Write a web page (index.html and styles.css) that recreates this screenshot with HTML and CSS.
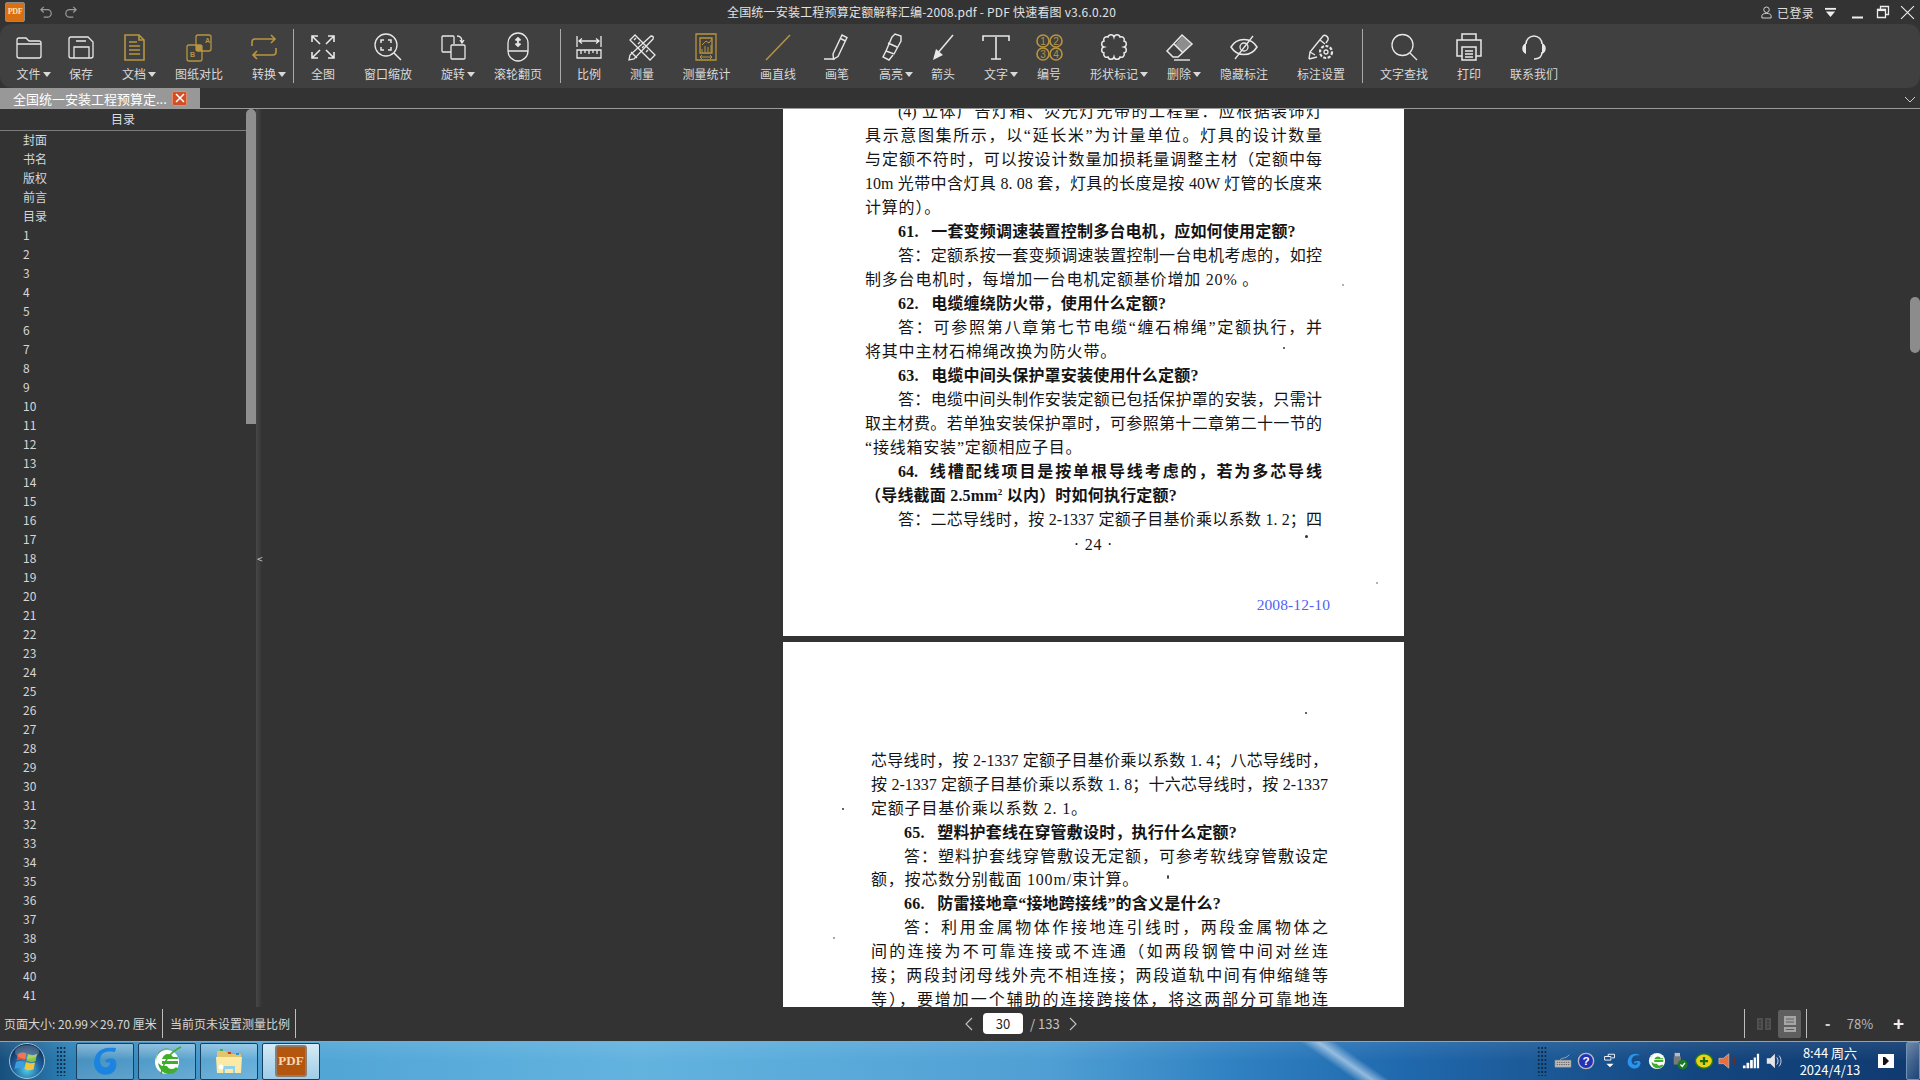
FILE: index.html
```html
<!DOCTYPE html>
<html lang="zh">
<head>
<meta charset="utf-8">
<title>PDF 快速看图</title>
<link rel="stylesheet" href="styles.css">
</head>
<body>
<div class="app">
  <header class="titlebar">
    <div class="tb-left">
      <div class="logo">PDF</div>
      <svg class="qa" viewBox="0 0 16 16"><path d="M5 2 2 5l3 3M2 5h7a4 4 0 0 1 0 8H5"/></svg>
      <svg class="qa" viewBox="0 0 16 16"><path d="M11 2l3 3-3 3M14 5H7a4 4 0 0 0 0 8h4"/></svg>
    </div>
    <div class="doc-title">全国统一安装工程预算定额解释汇编-2008.pdf - PDF 快速看图 v3.6.0.20</div>
    <div class="tb-right">
      <svg class="user" viewBox="0 0 12 14"><circle cx="6" cy="4" r="3"/><path d="M1 13v-2.500c0-1.500 2-2.500 5-2.500s5 1 5 2.500V13z"/></svg>
      <span class="login">已登录</span>
      <svg class="menu-ico" viewBox="0 0 14 12"><path class="bar" d="M1 1h12v2H1z"/><path class="bar" d="M2 5h10l-5 6z"/></svg>
      <svg class="win-btn minb" viewBox="0 0 14 14"><path d="M1 12.500h11" stroke-width="2"/></svg>
      <svg class="win-btn resb" viewBox="0 0 14 14"><path d="M1.500 4.500h8v8h-8zM4.500 4V1.500h8v8h-3" stroke-width="1.300"/><path d="M1.500 5h8" stroke-width="2.200"/></svg>
      <svg class="win-btn clsb" viewBox="0 0 14 14"><path d="M1 1l12 12M13 1 1 13"/></svg>
    </div>
  </header>

  <nav class="toolbar">
    <div class="group g1">
      <div class="tool"><svg class="ico" viewBox="0 0 30 30"><path d="M3 8a2 2 0 0 1 2-2h7l3 3h10a2 2 0 0 1 2 2v13a2 2 0 0 1-2 2H5a2 2 0 0 1-2-2zM3 12h24"/></svg><span class="lab">文件<i class="caret"></i></span></div>
      <div class="tool"><svg class="ico" viewBox="0 0 30 30"><path d="M5 5h17l5 5v14a2 2 0 0 1-2 2H5a2 2 0 0 1-2-2V7a2 2 0 0 1 2-2zM10 9h10M8 26V15h15v11"/></svg><span class="lab">保存</span></div>
      <div class="tool"><svg class="ico gold" viewBox="0 0 30 30"><path d="M6 3h14l5 5v20H6zM20 3v5h5M10 10h8M10 14h11M10 18h11M10 22h11" stroke-width="1.600"/></svg><span class="lab">文档<i class="caret"></i></span></div>
      <div class="tool"><svg class="ico gold" viewBox="0 0 30 30"><rect x="12" y="3" width="15" height="16" rx="2"/><rect x="3" y="13" width="15" height="16" rx="2"/><rect class="fill" x="12" y="13" width="6" height="6"/><text class="mini" x="21" y="11">A</text><text class="mini" x="6" y="25">B</text></svg><span class="lab">图纸对比</span></div>
      <div class="tool"><svg class="ico gold" viewBox="0 0 30 30"><path d="M3 14v-4a3 3 0 0 1 3-3h20M22 3l4 4-4 4M27 16v4a3 3 0 0 1-3 3H4M8 19l-4 4 4 4" stroke-width="1.600"/></svg><span class="lab">转换<i class="caret"></i></span></div>
    </div>
    <div class="sep"></div>
    <div class="group g2">
      <div class="tool"><svg class="ico" viewBox="0 0 30 30"><path d="M4 4l8 8M4 10V4h6M26 4l-8 8M20 4h6v6M4 26l8-8M4 20v6h6M26 26l-8-8M26 20v6h-6" stroke-width="1.600"/></svg><span class="lab">全图</span></div>
      <div class="tool"><svg class="ico" viewBox="0 0 30 30"><circle cx="13" cy="13" r="11"/><path d="M21 21l7 7M8 11V8h3M15 8h3v3M18 15v3h-3M11 18H8v-3" stroke-width="1.500"/></svg><span class="lab">窗口缩放</span></div>
      <div class="tool"><svg class="ico" viewBox="0 0 30 30"><path d="M13 20H5a1 1 0 0 1-1-1V5a1 1 0 0 1 1-1h10a1 1 0 0 1 1 1v7"/><rect x="13" y="13" width="14" height="14" rx="1"/><path d="M19 4c3 0 5 2 5 6M22 8l2 3 2-3"/></svg><span class="lab">旋转<i class="caret"></i></span></div>
      <div class="tool"><svg class="ico" viewBox="0 0 30 30"><path d="M5 11a10 10 0 0 1 20 0v8a10 10 0 0 1-20 0zM5 19h20"/><path d="M15 6v8M12.500 8.500 15 6l2.500 2.500M12.500 11.500 15 14l2.500-2.500" stroke-width="1.800"/></svg><span class="lab">滚轮翻页</span></div>
    </div>
    <div class="sep"></div>
    <div class="group g3a">
      <div class="tool"><svg class="ico" viewBox="0 0 30 30"><path d="M3 4v11M27 4v11M5 9h20M8 6.500 5 9l3 2.500M22 6.500 25 9l-3 2.500" stroke-width="1.300"/><path d="M3 18h24v8H3zM7 18v4M11 18v3M15 18v4M19 18v3M23 18v4" stroke-width="1.300"/></svg><span class="lab">比例</span></div>
    </div>
    <div class="group g3b">
      <div class="tool"><svg class="ico" viewBox="0 0 30 30"><path d="M8 3 3 8l20 20 5-5zM7 8l2-2M11 12l2-2M15 16l2-2M19 20l2-2"/><path d="M24 4c2 0 3 1 2 3L7 27l-5 1 1-5zM4 20l6 6"/></svg><span class="lab">测量</span></div>
      <div class="tool"><svg class="ico gold" viewBox="0 0 30 30"><path d="M5 2h20v26H5zM9 6h12v15H9z" stroke-width="1.300"/><path d="M11 17v3M14 14v6M17 15v5M20 13v7M11 13l4-4 3 2 3-4M9 25h12M11 23l-2 2 2 2M19 23l2 2-2 2" stroke-width="1"/></svg><span class="lab">测量统计</span></div>
      <div class="tool"><svg class="ico gold" viewBox="0 0 30 30"><path d="M3 28 27 3" stroke-width="1.500"/></svg><span class="lab">画直线</span></div>
      <div class="tool"><svg class="ico" viewBox="0 0 30 30"><path d="M11 22 20 3l5 2.500-9 19-4.500 2.500zM18.500 6.500l5 2.500M2 27h11" stroke-width="1.400"/></svg><span class="lab">画笔</span></div>
      <div class="tool"><svg class="ico" viewBox="0 0 30 30"><path d="M16 5l3-3 6 2 0 5-7 13-8-3zM10 19l-3 6 6 3 4-5M12 11l9 4" stroke-width="1.400"/></svg><span class="lab">高亮<i class="caret"></i></span></div>
      <div class="tool"><svg class="ico" viewBox="0 0 30 30"><path d="M25 3 9 22" stroke-width="1.500"/><path class="solid" d="M5 28l3-11 7 6z"/></svg><span class="lab">箭头</span></div>
      <div class="tool"><svg class="ico" viewBox="0 0 30 30"><path d="M15 5v22M10 27h10M2 9V4h26v5" stroke-width="1.600"/></svg><span class="lab">文字<i class="caret"></i></span></div>
      <div class="tool"><svg class="ico gold nums" viewBox="0 0 30 30"><circle cx="9" cy="9" r="6"/><circle cx="22" cy="9" r="6"/><circle cx="9" cy="22" r="6"/><circle cx="22" cy="22" r="6"/><text x="9" y="12.500">1</text><text x="22" y="12.500">2</text><text x="9" y="25.500">3</text><text x="22" y="25.500">4</text></svg><span class="lab">编号</span></div>
      <div class="tool"><svg class="ico" viewBox="0 0 30 30"><path d="M5 9a3 3 0 0 1 4-4a3.100 3.100 0 0 1 6 0a3.100 3.100 0 0 1 6 0a3 3 0 0 1 4 4a3.100 3.100 0 0 1 0 6a3.100 3.100 0 0 1 0 6a3 3 0 0 1-4 4a3.100 3.100 0 0 1-6 0a3.100 3.100 0 0 1-6 0a3 3 0 0 1-4-4a3.100 3.100 0 0 1 0-6a3.100 3.100 0 0 1 0-6z" stroke-width="1.500"/></svg><span class="lab">形状标记<i class="caret"></i></span></div>
      <div class="tool"><svg class="ico" viewBox="0 0 30 30"><path class="hatch" d="M11 13 18 4l9 8-8 9z"/><path d="M3 19 18 3l10 9-14 13H9zM10 12l9 9" stroke-width="1.500"/><path class="under" d="M10 28h16"/></svg><span class="lab">删除<i class="caret"></i></span></div>
      <div class="tool"><svg class="ico" viewBox="0 0 30 30"><path d="M2 15c6-10 20-10 26 0-6 10-20 10-26 0z" stroke-width="1.500"/><circle cx="15" cy="15" r="4"/><path d="M6 27 24 4"/></svg><span class="lab">隐藏标注</span></div>
      <div class="tool"><svg class="ico" viewBox="0 0 30 30"><path d="M3 27l1-7L17 4c2-2 6 1 5 4l-2 3M4 20l5 3M3 27l8-2M14 8l5 4" stroke-width="1.400"/><circle cx="20" cy="20" r="6" stroke-width="2.200" stroke-dasharray="3 1.500"/><circle cx="20" cy="20" r="2"/></svg><span class="lab">标注设置</span></div>
    </div>
    <div class="sep"></div>
    <div class="group g4">
      <div class="tool"><svg class="ico" viewBox="0 0 30 30"><circle cx="13.500" cy="13" r="10.500"/><path d="M21 21l7 7"/></svg><span class="lab">文字查找</span></div>
      <div class="tool"><svg class="ico" viewBox="0 0 30 30"><path d="M8 8V2h14v6M8 24H3V8h24v16h-5" stroke-width="1.500"/><path d="M8 15h14v13H8zM11 19h8M11 22h8M11 25h8" stroke-width="1.500"/></svg><span class="lab">打印</span></div>
      <div class="tool"><svg class="ico" viewBox="0 0 30 30"><path d="M7 12a8 8 0 0 1 16 0M23 20c0 5-3 7-8 7" stroke-width="1.500"/><path class="solid" d="M7 11v11c-5-2-5-9 0-11zM23 11v11c5-2 5-9 0-11z"/></svg><span class="lab">联系我们</span></div>
    </div>
  </nav>

  <div class="tabbar">
    <div class="tab"><span class="tab-text">全国统一安装工程预算定...</span><span class="tab-x"><svg viewBox="0 0 10 10"><path d="M1 1l8 8M9 1 1 9"/></svg></span></div>
    <svg class="tab-more" viewBox="0 0 12 7"><path d="M1 1l5 5 5-5"/></svg>
  </div>

  <main class="body">
    <aside class="sidebar">
      <div class="side-main">
        <div class="side-head">目录</div>
        <ul class="toc">
          <li>封面</li><li>书名</li><li>版权</li><li>前言</li><li>目录</li>
          <li>1</li><li>2</li><li>3</li><li>4</li><li>5</li><li>6</li><li>7</li><li>8</li><li>9</li><li>10</li>
          <li>11</li><li>12</li><li>13</li><li>14</li><li>15</li><li>16</li><li>17</li><li>18</li><li>19</li><li>20</li>
          <li>21</li><li>22</li><li>23</li><li>24</li><li>25</li><li>26</li><li>27</li><li>28</li><li>29</li><li>30</li>
          <li>31</li><li>32</li><li>33</li><li>34</li><li>35</li><li>36</li><li>37</li><li>38</li><li>39</li><li>40</li><li>41</li>
        </ul>
      </div>
      <div class="side-track"><div class="side-thumb"></div></div>
      <div class="splitter"><span class="collapse">&lt;</span></div>
    </aside>

    <section class="viewer">
      <article class="page page-a">
        <p class="ln fit ind">(4) 立体广告灯箱、荧光灯光带的工程量：应根据装饰灯</p>
        <p class="ln fit">具示意图集所示，以“延长米”为计量单位。灯具的设计数量</p>
        <p class="ln fit">与定额不符时，可以按设计数量加损耗量调整主材（定额中每</p>
        <p class="ln fit">10m 光带中含灯具 8. 08 套，灯具的长度是按 40W 灯管的长度来</p>
        <p class="ln">计算的）。</p>
        <p class="ln ind hd">61.&nbsp;&nbsp; 一套变频调速装置控制多台电机，应如何使用定额?</p>
        <p class="ln fit ind">答：定额系按一套变频调速装置控制一台电机考虑的，如控</p>
        <p class="ln">制多台电机时，每增加一台电机定额基价增加 20% 。</p>
        <p class="ln ind hd">62.&nbsp;&nbsp; 电缆缠绕防火带，使用什么定额?</p>
        <p class="ln fit ind">答：可参照第八章第七节电缆“缠石棉绳”定额执行，并</p>
        <p class="ln">将其中主材石棉绳改换为防火带。</p>
        <p class="ln ind hd">63.&nbsp;&nbsp; 电缆中间头保护罩安装使用什么定额?</p>
        <p class="ln fit ind">答：电缆中间头制作安装定额已包括保护罩的安装，只需计</p>
        <p class="ln fit">取主材费。若单独安装保护罩时，可参照第十二章第二十一节的</p>
        <p class="ln">“接线箱安装”定额相应子目。</p>
        <p class="ln fit ind hd">64.&nbsp; 线槽配线项目是按单根导线考虑的，若为多芯导线</p>
        <p class="ln hd">（导线截面 2.5mm<sup>2</sup> 以内）时如何执行定额?</p>
        <p class="ln fit ind">答：二芯导线时，按 2-1337 定额子目基价乘以系数 1. 2；四</p>
        <p class="ln pno">· 24 ·</p>
        <p class="stamp">2008-12-10</p>
        <i class="speck s1"></i><i class="speck s2"></i><i class="speck s3"></i><i class="speck s4"></i>
      </article>
      <article class="page page-b">
        <p class="ln fit">芯导线时，按 2-1337 定额子目基价乘以系数 1. 4；八芯导线时，</p>
        <p class="ln fit">按 2-1337 定额子目基价乘以系数 1. 8；十六芯导线时，按 2-1337</p>
        <p class="ln">定额子目基价乘以系数 2. 1。</p>
        <p class="ln ind hd">65.&nbsp;&nbsp; 塑料护套线在穿管敷设时，执行什么定额?</p>
        <p class="ln fit ind">答：塑料护套线穿管敷设无定额，可参考软线穿管敷设定</p>
        <p class="ln">额，按芯数分别截面 100m/束计算。</p>
        <p class="ln ind hd">66.&nbsp;&nbsp; 防雷接地章“接地跨接线”的含义是什么?</p>
        <p class="ln fit ind">答：利用金属物体作接地连引线时，两段金属物体之</p>
        <p class="ln fit">间的连接为不可靠连接或不连通（如两段钢管中间对丝连</p>
        <p class="ln fit">接；两段封闭母线外壳不相连接；两段道轨中间有伸缩缝等</p>
        <p class="ln fit">等），要增加一个辅助的连接跨接体，将这两部分可靠地连</p>
        <i class="speck s5"></i><i class="speck s6"></i><i class="speck s7"></i><i class="speck s8"></i>
      </article>
      <div class="view-thumb"></div>
    </section>
  </main>

  <footer class="statusbar">
    <div class="st-cell st-size">页面大小: 20.99×29.70 厘米</div>
    <div class="st-cell st-scale">当前页未设置测量比例</div>
    <div class="pager">
      <svg class="chev" viewBox="0 0 8 14"><path d="M7 1 1 7l6 6"/></svg>
      <span class="page-input">30</span>
      <span class="page-total">/ 133</span>
      <svg class="chev" viewBox="0 0 8 14"><path d="M1 1l6 6-6 6"/></svg>
    </div>
    <div class="st-right">
      <svg class="mode off" viewBox="0 0 14 12"><path d="M0 0h6v12H0zM8 0h6v12H8z"/><path class="cut" d="M2 3h2M2 6h2M2 9h2M10 3h2M10 6h2M10 9h2"/></svg>
      <div class="mode-on"><svg class="mode" viewBox="0 0 14 16"><path d="M1 0h12v9H1zM1 11h12v5H1z"/><path class="cut2" d="M3 3h8M3 6h8M3 13.500h8"/></svg></div>
      <span class="z-minus">-</span>
      <span class="z-val">78%</span>
      <span class="z-plus">+</span>
    </div>
  </footer>

  <div class="taskbar">
    <svg class="orb" viewBox="0 0 36 36">
      <defs><radialGradient id="orbg" cx=".5" cy=".75" r=".7"><stop offset="0" stop-color="#4fd0ea"/><stop offset=".55" stop-color="#1f5f9c"/><stop offset="1" stop-color="#0c2b52"/></radialGradient></defs>
      <circle cx="18" cy="18" r="17.500" fill="url(#orbg)" stroke="#9fc4d8"/>
      <path fill="#e8502e" d="M9 11c3-2 6-2 8.500-.5l-1.500 7c-3-1.500-6-1.500-8.500 0z"/>
      <path fill="#8cc63f" d="M19 11c3 1.500 6 1.500 9 0l-1.500 7c-3 1.500-6 1-9-.5z"/>
      <path fill="#3a9de0" d="M7 19c3-1.500 5.500-1.500 8.500 0L14 26c-3-1.500-5.500-1.500-8.500 0z"/>
      <path fill="#f7c33a" d="M17 19c3 1.500 6 1.500 9 .5L24.500 26.500c-3 1-6 1-9-.5z"/>
      <ellipse cx="18" cy="9" rx="12" ry="7" fill="#fff" opacity=".22"/>
    </svg>
    <div class="grip"></div>
    <div class="task-btn">
      <svg class="task-ico" viewBox="0 0 30 30"><path fill="#1c84e0" d="M26 2c-8-1-16 0-20 7-4 7-2 16 5 19 6 2 14 0 15-7 1-3 0-7-2-8-3-1-7 0-9 1l2 3c2-1 3-1 3 0 0 3-3 5-6 4-4-1-5-7-3-11 2-5 9-5 14-4z"/></svg>
    </div>
    <div class="task-btn">
      <svg class="task-ico" viewBox="0 0 30 30"><circle cx="15" cy="16" r="12" fill="#fff"/><path fill="#3fae2a" d="M4 16a11 12 0 0 1 22-3H10c1-3 3-5 6-5 2 0 4 1 5 3h5c-2-5-6-8-11-8C9 3 4 9 4 16zM10 15h16v3H10zM10 20h5c1 2 2 3 5 3 2 0 3-1 4-2l2 2c-2 3-5 5-9 5-6 0-10-5-11-11z"/><path fill="none" stroke="#3fae2a" stroke-width="1.500" d="M9 28C12 14 18 6 29 1"/></svg>
    </div>
    <div class="task-btn">
      <svg class="task-ico" viewBox="0 0 30 30"><path fill="#e3c46c" d="M3 5h9l2 3h13v8H3z"/><path fill="#fbe9a6" d="M2 11h26l-1 16H3z"/><path fill="#8fd0ea" d="M9 20h12v7h-2v-4h-8v4H9z"/><rect x="6" y="3" width="3" height="2" fill="#3fb24b"/><rect x="14" y="6" width="3" height="2" fill="#c8402e"/><rect x="22" y="7" width="3" height="2" fill="#3a8fd8"/><circle cx="7" cy="21" r="2.500" fill="#fff"/></svg>
    </div>
    <div class="task-btn active"><div class="pdf-big">PDF</div></div>
    <div class="tray">
      <div class="grip grip-r"></div>
      <svg class="ti" viewBox="0 0 20 20"><path fill="#bdbdbd" stroke="#777" stroke-width=".5" d="M1 9h18v8H1z"/><path stroke="#555" stroke-width="1" stroke-dasharray="1.500 1" d="M3 11.500h14M3 14h14"/><path fill="none" stroke="#aaa" d="M7 9c0-3 6-1 10-6"/></svg>
      <svg class="ti" viewBox="0 0 20 20"><circle cx="10" cy="10" r="8.500" fill="#2431b8" stroke="#bbb" stroke-width="1.500"/><text class="ti-q" x="10" y="14.500">?</text></svg>
      <svg class="ti" viewBox="0 0 20 20"><path fill="none" stroke="#fff" d="M4 5h7v4H4zM8 5V2.500h7v4h-3"/><path fill="#fff" d="M6 13h8l-4 4z"/></svg>
      <svg class="ti" viewBox="0 0 20 20"><path fill="#2a93ec" d="M17 3c-4-2-10-1-12 4-2 4-1 9 4 11 4 1 8 0 9-4 1-2 0-3-1-4-2 0-5 0-6 1l1 2c1-1 2-1 3-1 0 2-2 3-4 2-3-1-3-5-2-7 1-3 5-4 8-3z"/></svg>
      <svg class="ti" viewBox="0 0 20 20"><circle cx="10" cy="10" r="9" fill="#fff"/><path fill="#3fae2a" d="M3 10a7 7 0 0 1 14-2H7c1-2 2-3 4-3s3 1 3 2h3c-1-3-4-5-7-5-4 0-7 4-7 8zM7 9h10v2H7zM7 13h3c1 1 1 2 3 2 1 0 2-1 3-1l1 1c-1 2-3 3-6 3-4 0-7-3-7-7z"/></svg>
      <svg class="ti" viewBox="0 0 20 20"><path fill="#7a7a7a" d="M3 5h8v9H3z"/><path fill="#bbb" d="M4 1h6v4H4z"/><circle cx="13" cy="14" r="5.500" fill="#1c7a26"/><path fill="none" stroke="#fff" stroke-width="1.500" d="M10.500 14l2 2 3-4"/></svg>
      <svg class="ti" viewBox="0 0 20 20"><ellipse cx="10" cy="10" rx="9.500" ry="8" fill="#e9d316" stroke="#2c7a1a" stroke-width="1.500"/><path fill="none" stroke="#1f6a14" stroke-width="2.500" d="M10 5.500v9M5.500 10h9"/></svg>
      <svg class="ti" viewBox="0 0 20 20"><path fill="#e87040" stroke="#c9c9c9" stroke-width=".7" d="M1 7h5l6-5v16l-6-5H1z"/><path fill="none" stroke="#6b3030" d="M14 5c2 3 2 7 0 10M17 3c2 4 2 10 0 14"/></svg>
      <svg class="ti" viewBox="0 0 20 20"><path fill="#fff" d="M1 15h3v3H1zM5 12h3v6H5zM9 9h3v9H9zM13 6h2.500v12H13zM16.500 2H19v16h-2.500z"/></svg>
      <svg class="ti" viewBox="0 0 20 20"><path fill="#e6e6e6" d="M2 7h4l5-5v16l-5-5H2z"/><path fill="none" stroke="#e6e6e6" d="M13 6c2 2 2 6 0 8M15.500 4c3 3 3 9 0 12"/></svg>
      <div class="clock"><div>8:44 周六</div><div>2024/4/13</div></div>
      <div class="flag"><svg viewBox="0 0 8 8"><path d="M1 0h2l4 4-4 4H1z"/></svg></div>
      <div class="show-desk"></div>
    </div>
  </div>
</div>
</body>
</html>
```
FILE: styles.css
```css
* { box-sizing: border-box; }
html, body { margin: 0; padding: 0; height: 100%; overflow: hidden; }
body { font-family: "Noto Sans CJK SC", "Noto Sans", sans-serif; font-size: 12px; color: #ddd; background: #333; }
p, ul { margin: 0; padding: 0; }
.app { display: flex; flex-direction: column; width: 1920px; height: 1080px; }

/* title bar */
.titlebar { position: relative; flex: 0 0 24px; height: 24px; display: flex; align-items: center; justify-content: space-between; background: #333; }
.tb-left { display: flex; align-items: center; padding-left: 5px; }
.logo { width: 20px; height: 20px; border-radius: 2px; background: #d96f10; border: 1px solid #8a8a8a; color: #fbe2b5; font: bold 8px/18px "Liberation Serif", serif; text-align: center; letter-spacing: -.3px; }
.qa { width: 15px; height: 15px; margin-left: 14px; fill: none; stroke: #9b9b9b; stroke-width: 1.300; }
.qa + .qa { margin-left: 9px; }
.doc-title { position: absolute; left: 640px; width: 563px; text-align: center; color: #e2e2e2; font-size: 12px; letter-spacing: .2px; line-height: 24px; white-space: nowrap; }
.tb-right { display: flex; align-items: center; padding-right: 5px; }
.user { width: 11px; height: 13px; fill: none; stroke: #ddd; stroke-width: 1; }
.login { margin-left: 5px; font-size: 12px; letter-spacing: .3px; color: #ddd; }
.menu-ico { width: 13px; height: 11px; margin-left: 10px; }
.menu-ico .bar { fill: #eee; }
.win-btn { width: 14px; height: 14px; fill: none; stroke: #eee; stroke-width: 1; }
.minb { margin-left: 14px; }
.resb { margin-left: 11px; }
.clsb { margin-left: 10px; width: 15px; height: 15px; }

/* toolbar */
.toolbar { flex: 0 0 64px; height: 64px; display: flex; background: #404040; border-radius: 12px; }
.group { display: grid; grid-template-rows: 64px; justify-items: center; }
.g1 { grid-template-columns: 57px 48px 58px 72px 58px; }
.g2 { margin-left: 6px; grid-template-columns: 46px 84px 46px 84px; }
.g3a { margin-left: 14px; grid-template-columns: 28px; }
.g3b { margin-left: 18px; grid-template-columns: 42px 87px 56px 62px 46px 58px 48px 58px 72px 58px 72px 82px; }
.g4 { margin-left: 15px; grid-template-columns: 52px 78px 52px; }
.sep { flex: 0 0 1px; height: 54px; margin-top: 5px; background: #a9a9a9; }
.tool { display: flex; flex-direction: column; align-items: center; white-space: nowrap; }
.ico { width: 30px; height: 30px; margin-top: 8px; fill: none; stroke: #e8e8e8; stroke-width: 1.300; }
.ico.gold { stroke: #b8953f; }
.ico .fill { fill: #b8953f; stroke: none; }
.ico .solid { fill: #e8e8e8; stroke: none; }
.ico .hatch { fill: #8d8d8d; stroke: none; }
.ico .under { stroke: #b5b5b5; stroke-width: 2; }
.ico .mini { fill: #b8953f; stroke: none; font: bold 7px "Liberation Sans", sans-serif; }
.nums circle { stroke-width: 1.600; }
.nums text { fill: #b8953f; stroke: none; font: 10px "Liberation Sans", sans-serif; text-anchor: middle; }
.lab { position: relative; height: 16px; margin-top: 4px; font-size: 12px; line-height: 16px; color: #d9d9d9; }
.caret { position: absolute; left: 100%; top: 6px; width: 0; height: 0; margin-left: 2px; border: 4px solid transparent; border-top: 5px solid #d9d9d9; border-bottom: 0; }

/* tabs */
.tabbar { flex: 0 0 21px; height: 21px; display: flex; justify-content: space-between; background: #333; border-bottom: 1px solid #9a9a9a; }
.tab { display: flex; align-items: center; width: 200px; height: 20px; background: #989898; padding-left: 13px; }
.tab-text { width: 159px; font-size: 13px; color: #fff; white-space: nowrap; }
.tab-x { display: flex; align-items: center; justify-content: center; width: 15px; height: 15px; background: #cf4f28; border: 1px solid #e98a6b; border-radius: 2px; }
.tab-x svg { width: 10px; height: 10px; fill: none; stroke: #fff; stroke-width: 1.500; }
.tab-more { width: 12px; height: 7px; margin: 8px 4px 0 0; fill: none; stroke: #cfcfcf; stroke-width: 1; }

/* body */
.body { flex: 0 0 898px; height: 898px; display: flex; overflow: hidden; background: #333; }
.sidebar { flex: 0 0 262px; display: flex; }
.side-main { flex: 0 0 246px; overflow: hidden; }
.side-head { height: 22px; border-bottom: 1px solid #7c7c7c; text-align: center; line-height: 19px; font-size: 12px; color: #ddd; }
.toc { list-style: none; padding-left: 23px; }
.toc li { height: 19px; line-height: 18px; font-size: 12px; color: #d6d6d6; }
.side-track { flex: 0 0 10px; }
.side-thumb { height: 315px; background: #8f8f8f; border-radius: 5px 5px 0 0; }
.splitter { position: relative; flex: 0 0 6px; background: linear-gradient(90deg, #474747, #3a3a3a 70%, #333); }
.collapse { position: absolute; top: 440px; left: 1px; font-size: 10px; line-height: 20px; color: #cfcfcf; }

.viewer { position: relative; flex: 1; overflow: hidden; padding-left: 521px; }
.page { position: relative; width: 621px; background: #fff; color: #141414; overflow: hidden; font-size: 16px; }
.page-a { height: 527px; padding: 0 82px 0 82px; }
.page-b { height: 365px; margin-top: 6px; padding: 107px 76px 0 88px; }
.page-b .ln { height: 23.900px; }
.ln { height: 24px; line-height: 24px; letter-spacing: .8px; white-space: nowrap; text-align: left; font-family: "Liberation Serif", "Noto Sans CJK SC", serif; }
.page-a .ln:first-child { margin-top: -9px; }
.fit { text-align: justify; text-align-last: justify; white-space: normal; text-justify: inter-character; letter-spacing: 0; overflow: hidden; }
.ind { padding-left: 33px; }
.hd { font-weight: 700; letter-spacing: .2px; }
.fit.hd { letter-spacing: 0; }
.ln sup { font-size: 9px; line-height: 0; }
.pno { text-align: center; margin-top: 1px; }
.stamp { margin: 36px -8px 0 0; text-align: right; font: 15.500px/24px "Liberation Serif", serif; letter-spacing: .1px; color: #4f63f5; }
.speck { position: absolute; width: 2px; height: 2px; background: #333; border-radius: 50%; }
.s1 { left: 500px; top: 238px; }
.s2 { left: 522px; top: 426px; width: 3px; height: 3px; }
.s3 { left: 593px; top: 473px; background: #999; }
.s4 { left: 559px; top: 175px; background: #999; }
.s5 { left: 522px; top: 70px; }
.s6 { left: 59px; top: 166px; }
.s7 { left: 50px; top: 295px; background: #888; }
.s8 { left: 384px; top: 233px; width: 2px; height: 4px; }
.view-thumb { position: absolute; right: 0; top: 188px; width: 10px; height: 56px; background: #8c8c8c; border-radius: 5px; }

/* status bar */
.statusbar { flex: 0 0 34px; height: 34px; display: flex; background: #333; }
.st-cell { height: 29px; margin-top: 2px; border-right: 1px solid #bdbdbd; font-size: 12px; line-height: 30px; color: #d6d6d6; white-space: nowrap; }
.st-size { width: 163px; padding-left: 4px; }
.st-scale { width: 133px; padding-left: 7px; }
.pager { display: flex; align-items: center; margin-left: 669px; height: 33px; }
.chev { width: 8px; height: 14px; fill: none; stroke: #c4c4c4; stroke-width: 1.100; }
.page-input { width: 40px; height: 21px; margin-left: 10px; background: #fff; border-radius: 4px; color: #222; text-align: center; font-size: 13px; line-height: 21px; }
.page-total { width: 46px; padding-left: 7px; color: #c4c4c4; font-size: 13px; }
.st-right { display: flex; align-items: center; width: 176px; height: 29px; margin: 2px 0 0 auto; border-left: 1px solid #bdbdbd; position: relative; padding-left: 12px; }
.mode { width: 14px; height: 12px; fill: #4f4f4f; }
.mode .cut { stroke: #2f2f2f; fill: none; }
.mode-on { display: flex; align-items: center; justify-content: center; width: 23px; height: 28px; margin-left: 7px; background: #5f5f5f; border-radius: 2px; }
.mode-on .mode { width: 14px; height: 16px; fill: #a5a5a5; }
.mode .cut2 { stroke: #5f5f5f; fill: none; }
.z-minus { margin-left: 23px; padding-left: 1px; width: 12px; color: #d0d0d0; font: bold 16px "Liberation Sans", sans-serif; }
.z-val { margin-left: 1px; width: 46px; text-align: center; color: #b9b9b9; font-size: 13px; }
.z-plus { margin-left: 10px; color: #eee; font: bold 19px "Liberation Sans", sans-serif; }
.mode-on::after { content: ""; position: absolute; left: 61px; top: 0; width: 1px; height: 29px; background: #bdbdbd; }

/* taskbar */
.taskbar { flex: 0 0 39px; height: 39px; display: flex; align-items: center; border-top: 1px solid #7fa9c6;
  background:
    linear-gradient(35deg, transparent 68.600%, rgba(220,236,250,.6) 69.500%, transparent 70.400%),
    linear-gradient(180deg, rgba(255,255,255,.08), rgba(255,255,255,0) 50%),
    linear-gradient(90deg, #174f7c 0, #2c80b6 70px, #4ea3d4 260px, #63b3df 640px, #4f9fd4 1050px, #2f80c1 1240px, #2069ae 1400px, #1c5a98 1530px, #13467f 1700px, #103a70 1920px); }
.orb { flex: 0 0 36px; width: 36px; height: 36px; margin-left: 9px; }
.grip { flex: 0 0 10px; width: 10px; height: 30px; margin-left: 11px; background: radial-gradient(circle, #0e2a44 1px, transparent 1.200px) 0 0 / 3.400px 4px; }
.task-btn { display: flex; align-items: center; justify-content: center; flex: 0 0 58px; height: 37px; margin-left: 4px; border: 1px solid #173f5f; border-radius: 2px; background: linear-gradient(180deg, rgba(255,255,255,.4), rgba(255,255,255,.12) 45%, rgba(255,255,255,.2)); }
.grip + .task-btn { margin-left: 10px; }
.task-btn.active { background: linear-gradient(180deg, rgba(255,255,255,.75), rgba(255,255,255,.45)); }
.task-ico { width: 30px; height: 30px; }
.pdf-big { width: 32px; height: 32px; border-radius: 3px; background: #b5560f; border: 2px solid #8b7d70; color: #f3d9b5; font: bold 13px/28px "Liberation Serif", serif; text-align: center; }
.tray { display: flex; align-items: center; margin-left: auto; height: 38px; }
.grip-r { margin: 0 4px 0 0; }
.ti { flex: 0 0 18px; width: 18px; height: 18px; margin: 0 2.750px; }
.ti-q { fill: #fff; font: bold 13px "Liberation Sans", sans-serif; text-anchor: middle; }
.clock { width: 72px; margin-left: 8px; text-align: center; color: #fff; font-size: 13px; line-height: 17px; white-space: nowrap; }
.flag { display: flex; align-items: center; justify-content: center; width: 16px; height: 14px; margin-left: 12px; background: #fff; }
.flag svg { width: 8px; height: 8px; fill: #111; }
.show-desk { width: 14px; height: 38px; margin-left: 12px; border: 1px solid #6f94b5; border-radius: 2px; background: linear-gradient(120deg, rgba(255,255,255,.35), rgba(255,255,255,.05)); }
```
